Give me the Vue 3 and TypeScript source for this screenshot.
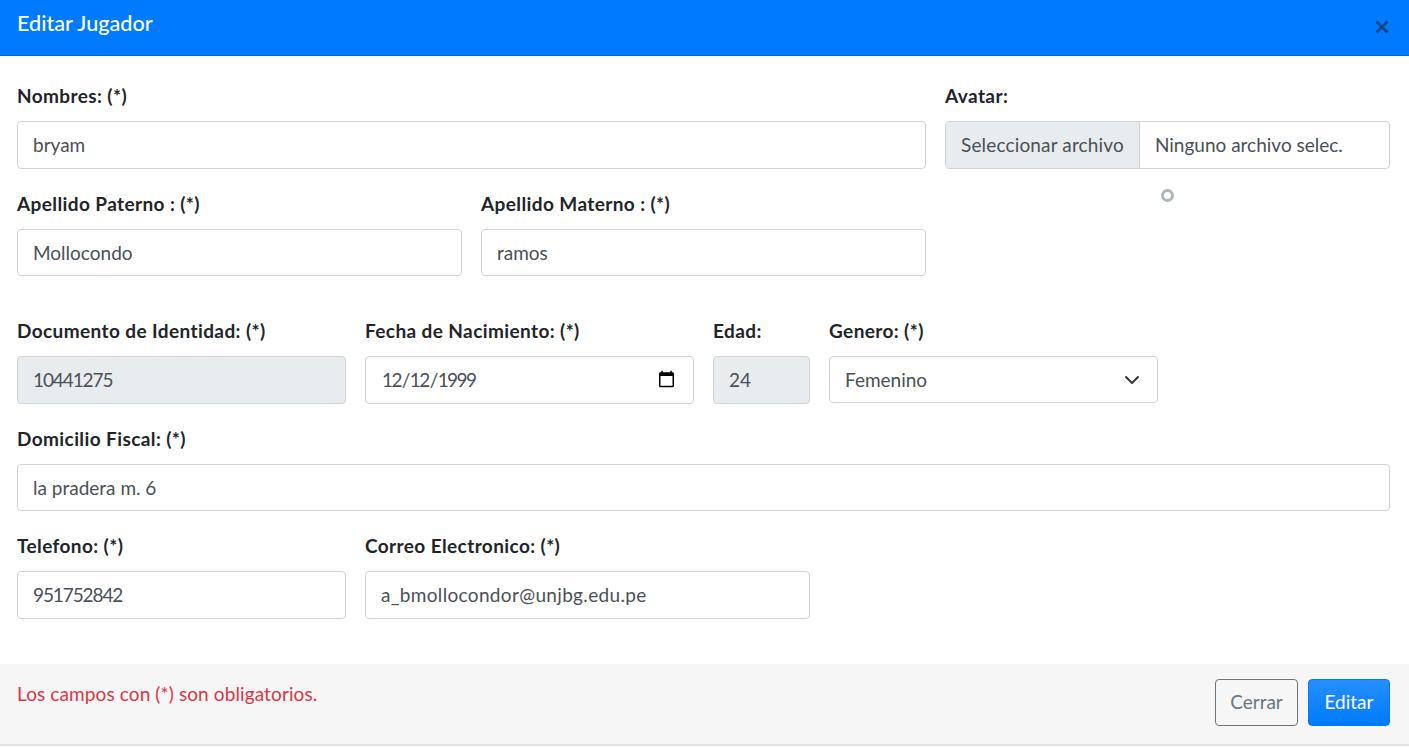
<script setup lang="ts">
import { ref } from 'vue'

const nombres = ref('bryam')
const paterno = ref('Mollocondo')
const materno = ref('ramos')
const documento = ref('10441275')
const nacimiento = ref('1999-12-12')
const edad = ref('24')
const genero = ref('Femenino')
const domicilio = ref('la pradera m. 6')
const telefono = ref('951752842')
const correo = ref('a_bmollocondor@unjbg.edu.pe')
</script>

<template>
  <div class="modal">
    <header class="modal-header">
      <h5 class="modal-title">Editar Jugador</h5>
      <button class="close" type="button" aria-label="Cerrar">
        <svg width="14" height="14" viewBox="0 0 14 14" fill="none" stroke="currentColor" stroke-width="3">
          <path d="M1.5 1.5l11 11M12.5 1.5l-11 11" />
        </svg>
      </button>
    </header>

    <form class="modal-body" @submit.prevent>
      <div class="field span-8">
        <label>Nombres: (*)</label>
        <input v-model="nombres" class="control" type="text" />
      </div>
      <div class="field span-4 avatar">
        <label>Avatar:</label>
        <div class="file-input">
          <span class="file-btn">Seleccionar archivo</span>
          <span class="file-name">Ninguno archivo selec.</span>
        </div>
        <div class="preview"><span class="ring"></span></div>
      </div>

      <div class="field span-4 spaced">
        <label>Apellido Paterno : (*)</label>
        <input v-model="paterno" class="control" type="text" />
      </div>
      <div class="field span-4 spaced">
        <label>Apellido Materno : (*)</label>
        <input v-model="materno" class="control" type="text" />
      </div>

      <div class="field span-3">
        <label>Documento de Identidad: (*)</label>
        <input v-model="documento" class="control digits" type="text" disabled />
      </div>
      <div class="field span-3">
        <label>Fecha de Nacimiento: (*)</label>
        <input v-model="nacimiento" class="control date" type="date" />
      </div>
      <div class="field span-1">
        <label>Edad:</label>
        <input v-model="edad" class="control" type="text" disabled />
      </div>
      <div class="field span-3">
        <label>Genero: (*)</label>
        <select v-model="genero" class="control select">
          <option>Masculino</option>
          <option>Femenino</option>
        </select>
      </div>

      <div class="field span-12">
        <label>Domicilio Fiscal: (*)</label>
        <input v-model="domicilio" class="control" type="text" />
      </div>

      <div class="field span-3">
        <label>Telefono: (*)</label>
        <input v-model="telefono" class="control digits" type="text" />
      </div>
      <div class="field span-4">
        <label>Correo Electronico: (*)</label>
        <input v-model="correo" class="control email" type="text" />
      </div>
    </form>

    <footer class="modal-footer">
      <p class="required">Los campos con (*) son obligatorios.</p>
      <div class="actions">
        <button class="btn btn-outline" type="button">Cerrar</button>
        <button class="btn btn-primary" type="button">Editar</button>
      </div>
    </footer>
  </div>
</template>

<style scoped>
.modal {
  font-family: Lato, "Noto Sans", sans-serif;
  font-size: 19px;
  color: #212529;
  background: #fff;
  height: 746px;
  border-bottom: 2px solid #dee2e6;
  box-sizing: border-box;
  display: flex;
  flex-direction: column;
}

.modal-header {
  height: 56px;
  box-sizing: border-box;
  flex: none;
  display: flex;
  align-items: center;
  justify-content: space-between;
  padding: 0 20px 9px 17px;
  background: #007bff;
  border-bottom: 1px solid #0069d9;
}

.modal-title {
  margin: 0;
  font-size: 21.6px;
  font-weight: 500;
  color: #fff;
}

.close {
  padding: 0;
  margin-top: 8px;
  border: 0;
  background: none;
  color: #0d4a8c;
  display: flex;
}

.modal-body {
  flex: 1;
  display: grid;
  grid-template-columns: repeat(12, 97px);
  column-gap: 19px;
  grid-auto-rows: min-content;
  padding: 29px 19px 0 17px;
}

.field {
  margin-bottom: 24px;
  min-width: 0;
}

.field.spaced {
  margin-bottom: 44px;
}

.span-1 { grid-column: span 1; }
.span-3 { grid-column: span 3; }
.span-4 { grid-column: span 4; }
.span-8 { grid-column: span 8; }
.span-12 { grid-column: span 12; }

.avatar {
  grid-column: 9 / span 4;
  grid-row: 1 / span 2;
}

label {
  display: block;
  height: 28px;
  line-height: 22px;
  margin-bottom: 8px;
  font-weight: 700;
  font-size: 19px;
  letter-spacing: 0.4px;
}

.control {
  display: block;
  width: 100%;
  height: 47.5px;
  box-sizing: border-box;
  padding: 6px 15px;
  border: 1px solid #ced4da;
  border-radius: 4px;
  background: #fff;
  color: #495057;
  font: inherit;
  outline: none;
}

.control:disabled {
  background: #e9ecef;
  opacity: 1;
}

.digits {
  letter-spacing: -1.1px;
}

.date {
  letter-spacing: -1.6px;
}

.email {
  letter-spacing: 0.33px;
}

.select {
  appearance: none;
  height: 47px;
  background-image: url("data:image/svg+xml,%3csvg xmlns='http://www.w3.org/2000/svg' viewBox='0 0 16 16'%3e%3cpath fill='none' stroke='%23343a40' stroke-linecap='round' stroke-linejoin='round' stroke-width='2' d='M2 5l6 6 6-6'/%3e%3c/svg%3e");
  background-repeat: no-repeat;
  background-position: right 17px center;
  background-size: 16px 16px;
}

.file-input {
  display: flex;
  height: 47.5px;
  box-sizing: border-box;
  border: 1px solid #ced4da;
  border-radius: 4px;
  overflow: hidden;
  color: #495057;
  align-items: stretch;
}

.file-btn {
  display: flex;
  align-items: center;
  padding: 0 15px;
  background: #e9ecef;
  border-right: 1px solid #ced4da;
  white-space: nowrap;
  letter-spacing: 0.15px;
}

.file-name {
  display: flex;
  align-items: center;
  padding: 0 15px;
  white-space: nowrap;
}

.preview {
  display: flex;
  justify-content: center;
  margin-top: 20px;
}

.ring {
  width: 13px;
  height: 13px;
  box-sizing: border-box;
  border: 3.5px solid #adb5bd;
  border-radius: 50%;
}

.modal-footer {
  flex: none;
  height: 80px;
  box-sizing: border-box;
  display: flex;
  justify-content: space-between;
  align-items: flex-start;
  padding: 15px 19px 0 17px;
  background: #f6f6f6;
}

.required {
  margin: 3px 0 0;
  color: #dc3545;
  line-height: 24px;
  letter-spacing: 0.11px;
}

.actions {
  display: flex;
  gap: 10px;
}

.btn {
  height: 47px;
  width: 83px;
  box-sizing: border-box;
  padding: 0 0 2px;
  border-radius: 4px;
  font: inherit;
}

.btn-outline {
  border: 1px solid #6c757d;
  background: transparent;
  color: #6c757d;
}

.btn-primary {
  width: 82px;
  border: 1px solid #007bff;
  background: linear-gradient(180deg, #268fff, #007bff);
  color: #fff;
}
</style>

<style>
html, body {
  background: #fff;
}
</style>
